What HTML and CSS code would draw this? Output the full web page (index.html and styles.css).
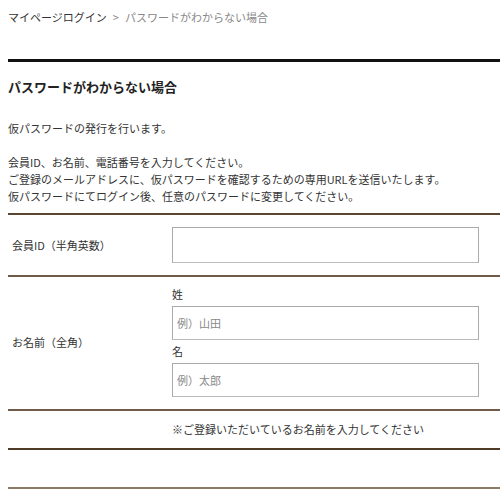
FILE: index.html
```html
<!DOCTYPE html>
<html lang="ja">
<head>
<meta charset="utf-8">
<link rel="stylesheet" href="styles.css">
</head>
<body>
<div class="page">
  <nav class="crumbs"><a class="crumb-link">マイページログイン</a><span class="sep">&gt;</span><span class="crumb-current">パスワードがわからない場合</span></nav>
  <section class="main">
    <h1 class="title">パスワードがわからない場合</h1>
    <p class="lead">仮パスワードの発行を行います。</p>
    <p class="desc">会員ID、お名前、電話番号を入力してください。<br>ご登録のメールアドレスに、仮パスワードを確認するための専用URLを送信いたします。<br>仮パスワードにてログイン後、任意のパスワードに変更してください。</p>
    <div class="form">
      <div class="row row-id">
        <div class="label">会員ID（半角英数）</div>
        <div class="field"><input class="input input-id" type="text"></div>
      </div>
      <div class="row row-name">
        <div class="label">お名前（全角）</div>
        <div class="field field-stack">
          <div class="sub">姓</div>
          <input class="input" type="text" placeholder="例）山田">
          <div class="sub sub-second">名</div>
          <input class="input" type="text" placeholder="例）太郎">
        </div>
      </div>
      <div class="row row-note">
        <div class="label"></div>
        <div class="field note">※ご登録いただいているお名前を入力してください</div>
      </div>
      <div class="row row-empty">
        <div class="label"></div>
        <div class="field"></div>
      </div>
    </div>
  </section>
</div>
</body>
</html>
```
FILE: styles.css
```css
html, body {
  margin: 0;
  padding: 0;
  background: #fff;
}
body {
  font-family: "Noto Sans CJK JP", "Noto Sans", sans-serif;
  font-size: 11px;
  color: #333;
  overflow: hidden;
}
.page {
  padding: 0 0 0 8px;
  width: 520px;
}
.crumbs {
  height: 35px;
  line-height: 35px;
  display: flex;
  align-items: center;
  white-space: nowrap;
}
.crumb-link { color: #333; }
.sep { color: #888; margin: 0 6px; }
.crumb-current { color: #888; }
.main {
  margin-top: 24px;
  border-top: 3px solid #111;
}
.title {
  margin: 0;
  font-size: 13px;
  font-weight: bold;
  line-height: 17px;
  padding-top: 16px;
  color: #222;
}
.lead {
  margin: 25px 0 0;
  line-height: 17px;
}
.desc {
  margin: 17px 0 0;
  line-height: 17px;
}
.form {
  margin-top: 8px;
  border-top: 2px solid #5a4530;
}
.row {
  display: grid;
  grid-template-columns: 164px 307px;
  align-items: center;
  border-bottom: 2px solid #6e5c48;
}
.row-id { height: 60px; }
.row-name { padding: 9px 0 12px; }
.row-note { height: 37px; border-bottom-color: #4f3c28; }
.row-empty { height: 37px; border-bottom-color: #8a7a66; }
.label { padding-left: 4px; }
.field-stack {
  display: flex;
  flex-direction: column;
}
.sub {
  line-height: 17px;
  margin-bottom: 3px;
}
.sub-second { margin-top: 3px; }
.input {
  box-sizing: border-box;
  width: 307px;
  height: 34px;
  margin: 0;
  border: 1px solid #aaa;
  border-bottom-color: #bbb;
  padding: 0 4px;
  font: inherit;
  color: #333;
  background: #fff;
}
.input-id { height: 36px; }
.input::placeholder { color: #888; }
.note { line-height: 17px; }
```
